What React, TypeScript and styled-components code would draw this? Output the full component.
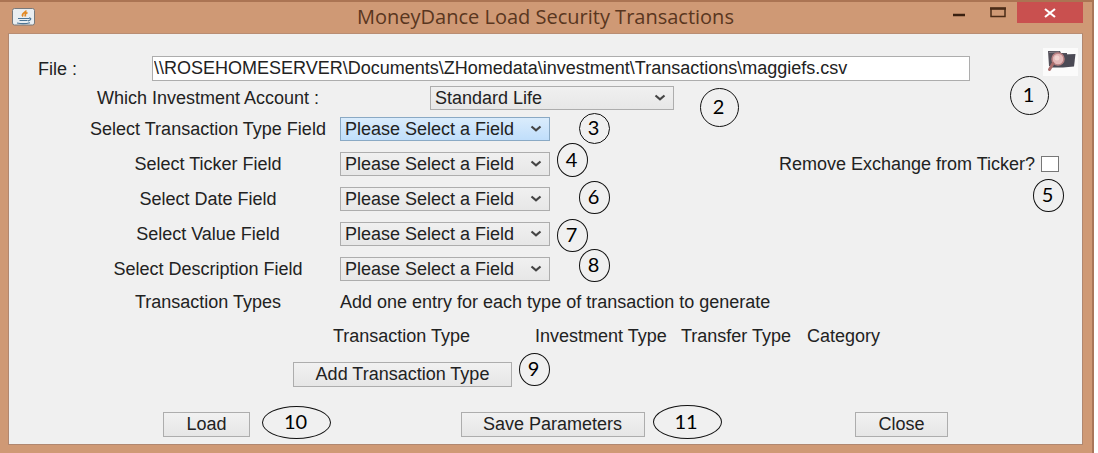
import React from "react";
import styled, { createGlobalStyle } from "styled-components";

const GlobalStyle = createGlobalStyle`
  *, *::before, *::after { box-sizing: border-box; }
  body {
    margin: 0;
    background: #fff;
    color: #222;
    font: 18px/24px "Liberation Sans", Arial, sans-serif;
  }
`;

const Window = styled.main`
  margin-right: 4px;
  padding: 0 9px 8px 8px;
  background: #cf9975;
  border-top: 2px solid #ab7453;
  border-right: 2px solid #a9765a;
  border-bottom: 1px solid #ab7453;
`;

const TitleBar = styled.header`
  display: grid;
  grid-template-columns: 1fr auto 1fr;
  height: 31px;
`;

const Title = styled.h1`
  margin: 0;
  color: #593620;
  font: 400 20px/30px "Open Sans", "Noto Sans", sans-serif;
  white-space: nowrap;
`;

const AppIcon = styled.svg`
  margin: 6px 0 0 4px;
`;

const WindowControls = styled.div`
  display: flex;
  justify-content: flex-end;
`;

const WindowButton = styled.button<{ $close?: boolean }>`
  display: grid;
  place-items: center;
  width: ${(p) => (p.$close ? 66 : 39)}px;
  height: 21px;
  padding: 0;
  border: 0;
  background: ${(p) => (p.$close ? "#c9504f" : "transparent")};
`;

const Panel = styled.form`
  padding: 14px 4px 7px 29px;
  background: #f0f0f0;
  border: 1px solid #b08770;
  border-top-color: #b98d73;
`;

const FileRow = styled.div`
  position: relative;
  display: flex;
  align-items: flex-end;
  height: 33px;
`;

const FileLabel = styled.label`
  width: 114px;
`;

const FileInput = styled.input`
  flex: 1;
  min-width: 0;
  height: 25px;
  padding: 0 1px;
  border: 1px solid #adadad;
  background: #fff;
  color: inherit;
  font: inherit;
`;

const BrowseButton = styled.button`
  align-self: flex-start;
  width: 35px;
  height: 28px;
  margin-left: 73px;
  padding: 0;
  border: 0;
  background: #fbfbfb;
`;

const AccountRow = styled.div`
  position: relative;
  display: flex;
  gap: 102px;
  margin: 5px 0 7px;
  padding-left: 50px;
`;

const Fields = styled.div`
  display: grid;
  gap: 11px;
  padding-left: 50px;
`;

const FieldRow = styled.div`
  position: relative;
  display: flex;
  gap: 12px;
  height: 24px;
`;

const FieldLabel = styled.label`
  width: 240px;
  text-align: center;
  white-space: nowrap;
`;

const SelectBox = styled.div<{ $wide?: boolean }>`
  display: grid;
  align-items: center;
  width: ${(p) => (p.$wide ? 244 : 210)}px;
  height: 24px;

  > * { grid-area: 1 / 1; }
  > svg { justify-self: end; margin-right: 8px; pointer-events: none; }
`;

const Select = styled.select<{ $active?: boolean }>`
  appearance: none;
  width: 100%;
  height: 24px;
  padding: 0 4px;
  border: 1px solid ${(p) => (p.$active ? "#8aa9c4" : "#adadad")};
  border-radius: 0;
  background: ${(p) =>
    p.$active
      ? "linear-gradient(#daecfc, #c0defb)"
      : "linear-gradient(#f0f0f0, #e7e7e7)"};
  color: inherit;
  font: inherit;
  line-height: 22px;
`;

const ExchangeOption = styled.label`
  display: flex;
  align-items: center;
  gap: 6px;
  margin-left: auto;
  margin-right: 19px;
  white-space: nowrap;
`;

const Checkbox = styled.input`
  appearance: none;
  width: 18px;
  height: 16px;
  margin: 0;
  border: 1px solid #777;
  background: #fff;
`;

const TypesRow = styled.div`
  display: flex;
  gap: 12px;
  margin-top: 9px;
  padding-left: 50px;
`;

const TypesLabel = styled.span`
  width: 240px;
  text-align: center;
`;

const TypesTable = styled.table`
  margin: 10px 0 0 295px;
  border-collapse: collapse;

  th { padding: 0; font-weight: 400; text-align: left; white-space: nowrap; }
`;

const TypeHeading = styled.th<{ $width: number }>`
  width: ${(p) => p.$width}px;
`;

const Anchor = styled.div`
  position: relative;
`;

const AddRow = styled.div`
  display: flex;
  margin: 14px 0 25px 255px;
`;

const ActionRow = styled.div`
  display: flex;
  justify-content: space-between;
  padding: 0 130px 0 125px;
`;

const Button = styled.button<{ $width: number }>`
  display: block;
  width: ${(p) => p.$width}px;
  height: 25px;
  padding: 0;
  border: 1px solid #adadad;
  background: linear-gradient(#f1f1f1, #e6e6e6);
  color: inherit;
  font: inherit;
  line-height: 23px;
  white-space: nowrap;
`;

const Callout = styled.span<{
  $top: number;
  $left?: string;
  $right?: number;
  $width: number;
  $height: number;
}>`
  position: absolute;
  z-index: 1;
  top: ${(p) => p.$top}px;
  left: ${(p) => p.$left ?? "auto"};
  right: ${(p) => (p.$right === undefined ? "auto" : `${p.$right}px`)};
  display: grid;
  place-items: center;
  width: ${(p) => p.$width}px;
  height: ${(p) => p.$height}px;
  padding: 0 2px 3px 0;
  border: 1px solid #111;
  border-radius: 50%;
  color: #000;
  font: 20px/24px Lato, Carlito, sans-serif;
`;

const Chevron = () => (
  <svg width="12" height="8" viewBox="0 0 12 8" aria-hidden="true">
    <path d="M1.5 1.5 L6 5.3 L10.5 1.5" fill="none" stroke="#444" strokeWidth="2.2" />
  </svg>
);

const JavaIcon = () => (
  <AppIcon width="24" height="18" viewBox="0 0 24 18" aria-hidden="true">
    <rect x=".5" y=".5" width="22" height="16.5" rx="2" fill="#e9eef1" stroke="#77797b" />
    <path d="M13.5 2.5C15 4.500 8.500 5.500 11 8.500M15.500 4.500C12.500 6 13 7 13.500 8.500" fill="none" stroke="#e28a25" strokeWidth="1.800" />
    <path d="M6 10.500h11M7.500 12.500h8M5 15q7 1.500 13-.3M17 9.800q3 .4 1 2.200l-2 1" fill="none" stroke="#4c7595" strokeWidth="1.200" />
  </AppIcon>
);

const BrowseIcon = () => (
  <svg width="35" height="28" viewBox="0 0 35 28" aria-hidden="true">
    <path d="M5 3l12 0 1 2h6v13H6z" fill="#54505a" />
    <path d="M20 6.500l12.500-.5-1.500 12.500-11 1H8z" fill="#4b4a55" />
    <path d="M6 4.500l10-.5" stroke="#88838a" />
    <circle cx="15" cy="11" r="6" fill="#e3b8b8" stroke="#b98082" strokeWidth="1.500" />
    <circle cx="14" cy="10" r="2.500" fill="#f1d3d0" />
    <path d="M10 15.500L6.500 21.500" stroke="#aa6d6c" strokeWidth="3" strokeLinecap="round" />
  </svg>
);

const fields = [
  { id: "type", label: "Select Transaction Type Field", number: 3, left: 491, top: -4, height: 31 },
  { id: "ticker", label: "Select Ticker Field", number: 4, left: 469, top: -9, height: 34 },
  { id: "date", label: "Select Date Field", number: 6, left: 491, top: -6, height: 33 },
  { id: "value", label: "Select Value Field", number: 7, left: 469, top: -3, height: 33 },
  { id: "description", label: "Select Description Field", number: 8, left: 491, top: -8, height: 33 },
];

export default function App() {
  return (
    <>
      <GlobalStyle />
      <Window>
        <TitleBar>
          <JavaIcon />
          <Title>MoneyDance Load Security Transactions</Title>
          <WindowControls>
            <WindowButton type="button" aria-label="Minimize">
              <svg width="12" height="21"><path d="M0 13h12" stroke="#3a2010" strokeWidth="2.500" /></svg>
            </WindowButton>
            <WindowButton type="button" aria-label="Maximize">
              <svg width="16" height="21"><path d="M1 6.500h14v8H1z" fill="none" stroke="#4a2b17" strokeWidth="1.500" /><path d="M0 6.500h16" stroke="#4a2b17" strokeWidth="2.500" /></svg>
            </WindowButton>
            <WindowButton type="button" aria-label="Close window" $close>
              <svg width="12" height="10"><path d="M1 1l10 8M11 1L1 9" stroke="#fff" strokeWidth="2.200" /></svg>
            </WindowButton>
          </WindowControls>
        </TitleBar>

        <Panel onSubmit={(e) => e.preventDefault()}>
          <FileRow>
            <FileLabel htmlFor="file">File :</FileLabel>
            <FileInput
              id="file"
              defaultValue={"\\\\ROSEHOMESERVER\\Documents\\ZHomedata\\investment\\Transactions\\maggiefs.csv"}
            />
            <BrowseButton type="button" aria-label="Browse">
              <BrowseIcon />
            </BrowseButton>
            <Callout $top={28} $right={29} $width={39} $height={39}>1</Callout>
          </FileRow>

          <AccountRow>
            <FieldLabel htmlFor="account">Which Investment Account :</FieldLabel>
            <SelectBox $wide>
              <Select id="account"><option>Standard Life</option></Select>
              <Chevron />
            </SelectBox>
            <Callout $top={2} $left="662px" $width={39} $height={39}>2</Callout>
          </AccountRow>

          <Fields>
            {fields.map((f) => (
              <FieldRow key={f.id}>
                <FieldLabel htmlFor={f.id}>{f.label}</FieldLabel>
                <SelectBox>
                  <Select id={f.id} $active={f.id === "type"}><option>Please Select a Field</option></Select>
                  <Chevron />
                </SelectBox>
                <Callout $top={f.top} $left={`${f.left}px`} $width={31} $height={f.height}>{f.number}</Callout>
                {f.id === "ticker" && (
                  <>
                    <ExchangeOption>
                      Remove Exchange from Ticker?
                      <Checkbox type="checkbox" />
                    </ExchangeOption>
                    <Callout $top={27} $right={14} $width={31} $height={33}>5</Callout>
                  </>
                )}
              </FieldRow>
            ))}
          </Fields>

          <TypesRow>
            <TypesLabel>Transaction Types</TypesLabel>
            <span>Add one entry for each type of transaction to generate</span>
          </TypesRow>

          <TypesTable>
            <thead>
              <tr>
                <TypeHeading $width={202}>Transaction Type</TypeHeading>
                <TypeHeading $width={146}>Investment Type</TypeHeading>
                <TypeHeading $width={126}>Transfer Type</TypeHeading>
                <TypeHeading $width={80}>Category</TypeHeading>
              </tr>
            </thead>
          </TypesTable>

          <AddRow>
            <Anchor>
              <Button type="button" $width={219}>Add Transaction Type</Button>
              <Callout $top={-9} $left="calc(100% + 7px)" $width={31} $height={33}>9</Callout>
            </Anchor>
          </AddRow>

          <ActionRow>
            <Anchor>
              <Button type="submit" $width={87}>Load</Button>
              <Callout $top={-6} $left="calc(100% + 12px)" $width={69} $height={33}>10</Callout>
            </Anchor>
            <Anchor>
              <Button type="button" $width={184}>Save Parameters</Button>
              <Callout $top={-7} $left="calc(100% + 8px)" $width={69} $height={34}>11</Callout>
            </Anchor>
            <Anchor>
              <Button type="button" $width={93}>Close</Button>
            </Anchor>
          </ActionRow>
        </Panel>
      </Window>
    </>
  );
}
